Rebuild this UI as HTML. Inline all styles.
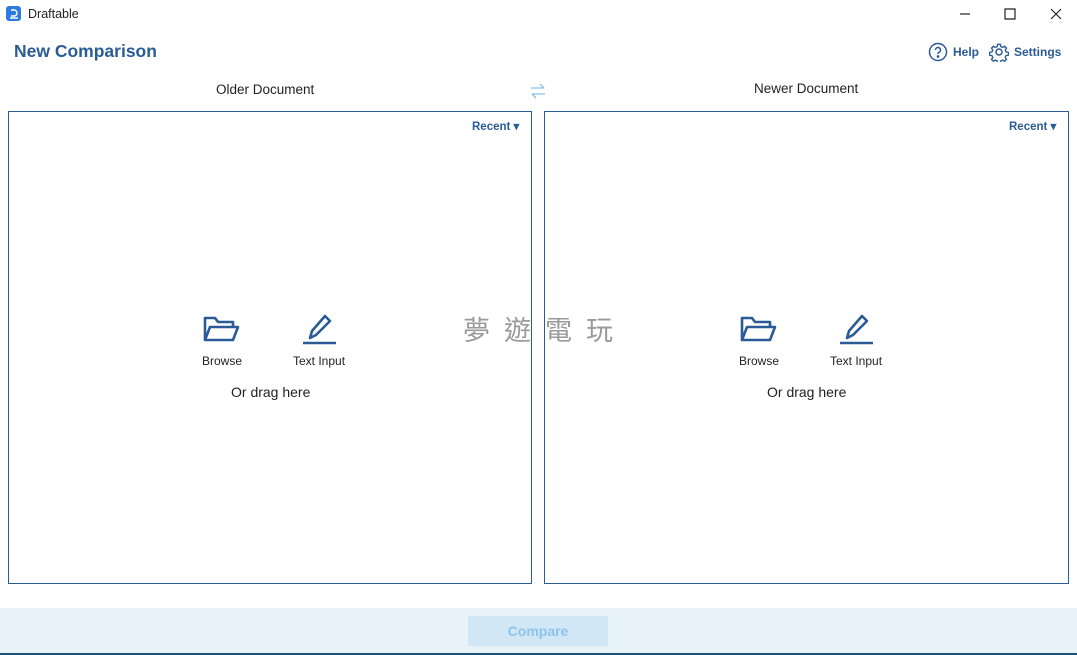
<!DOCTYPE html>
<html><head><meta charset="utf-8"><style>
body{margin:0;width:1077px;height:655px;position:relative;background:#fff;font-family:"Liberation Sans","Noto Sans CJK SC",sans-serif;overflow:hidden;color:#222}
.a{position:absolute}
.box{position:absolute;border:1px solid #2a5b96;background:#fff}
.blue{color:#2a5b96}
.lbl{font-size:12px;color:#222}
.rec{font-size:11.5px;font-weight:bold;color:#2a5b96}
</style></head><body>
<div class="a" style="left:6px;top:6px;width:15px;height:15px;background:#2d7be0;border-radius:3px"></div>
<svg class="a" style="left:6px;top:6px" width="15" height="15"><path d="M5 4h3a3 3 0 0 1 0 6H5M4 12h8" stroke="#fff" stroke-width="1.4" fill="none"/></svg>
<div class="a" style="left:28px;top:7px;font-size:12.5px">Draftable</div>
<svg class="a" style="left:955px;top:6px" width="110" height="16" stroke="#222" fill="none" stroke-width="1.2"><path d="M5 8h10"/><path d="M50 3h10v10h-10z"/><path d="M96 3l10 10M106 3l-10 10"/></svg>
<div class="a blue" style="left:14px;top:41px;font-size:17.5px;font-weight:bold">New Comparison</div>
<svg class="a" style="left:928px;top:42px" width="20" height="20" fill="none" stroke="#2a5b96" stroke-width="1.5"><circle cx="10" cy="10" r="8.5"/><path d="M7.5 8a2.5 2.5 0 1 1 3.5 2.3c-.8.4-1 1-1 1.7"/><circle cx="10" cy="14.5" r=".6" fill="#2a5b96"/></svg>
<div class="a blue" style="left:953px;top:45px;font-size:12px;font-weight:bold">Help</div>
<svg class="a" style="left:989px;top:42px" width="20" height="20" fill="none" stroke="#2a5b96" stroke-width="1.5"><circle cx="10" cy="10" r="3"/><path d="M8.5 1.5h3l.5 2.5 2 1 2.2-1.4 2.1 2.1-1.4 2.2 1 2 2.6.6v3l-2.6.5-1 2 1.4 2.2-2.1 2.1-2.2-1.4-2 1-.5 2.6h-3l-.5-2.6-2-1-2.2 1.4-2.1-2.1 1.4-2.2-1-2-2.6-.5v-3l2.6-.6 1-2-1.4-2.2 2.1-2.1 2.2 1.4 2-1z" transform="translate(1 1) scale(.9)"/></svg>
<div class="a blue" style="left:1014px;top:45px;font-size:12px;font-weight:bold">Settings</div>
<div class="a" style="left:216px;top:82px;font-size:13.5px">Older Document</div>
<div class="a" style="left:754px;top:81px;font-size:13.5px">Newer Document</div>
<svg class="a" style="left:529px;top:82px" width="18" height="18" fill="none" stroke="#8cc0ea" stroke-width="1.3"><path d="M2 6h13M11 2l4 4M16 12H3M7 16l-4-4"/></svg>
<div class="box" style="left:8px;top:111px;width:522px;height:471px"></div>
<div class="box" style="left:544px;top:111px;width:523px;height:471px"></div>
<div class="a rec" style="left:472px;top:119px">Recent ▾</div>
<div class="a rec" style="left:1009px;top:119px">Recent ▾</div>
<svg class="a" style="left:202px;top:315px" width="40" height="30" fill="none" stroke="#2a5b96" stroke-width="2.6" stroke-linejoin="round"><path d="M3 25V3h10l3 4h15v5"/><path d="M3 25l5-13h28l-5 13z"/></svg>
<svg class="a" style="left:302px;top:312px" width="36" height="34" fill="none" stroke="#2a5b96" stroke-width="2.6" stroke-linejoin="round"><path d="M8 26l2-7L23 4l5 5-14 14z"/><path d="M1 31h33"/></svg>
<svg class="a" style="left:739px;top:315px" width="40" height="30" fill="none" stroke="#2a5b96" stroke-width="2.6" stroke-linejoin="round"><path d="M3 25V3h10l3 4h15v5"/><path d="M3 25l5-13h28l-5 13z"/></svg>
<svg class="a" style="left:839px;top:312px" width="36" height="34" fill="none" stroke="#2a5b96" stroke-width="2.6" stroke-linejoin="round"><path d="M8 26l2-7L23 4l5 5-14 14z"/><path d="M1 31h33"/></svg>
<div class="a lbl" style="left:202px;top:354px">Browse</div>
<div class="a lbl" style="left:293px;top:354px">Text Input</div>
<div class="a lbl" style="left:739px;top:354px">Browse</div>
<div class="a lbl" style="left:830px;top:354px">Text Input</div>
<div class="a" style="left:231px;top:384px;font-size:14px">Or drag here</div>
<div class="a" style="left:767px;top:384px;font-size:14px">Or drag here</div>
<div class="a" style="left:463px;top:309px;font-size:27px;color:#9a9a9a;letter-spacing:14px;font-family:'Noto Sans CJK TC',sans-serif">夢遊電玩</div>
<div class="a" style="left:0;top:608px;width:1077px;height:45px;background:#e7f2f9"></div>
<div class="a" style="left:0;top:653px;width:1077px;height:2px;background:#1d4f7a"></div>
<div class="a" style="left:468px;top:616px;width:140px;height:30px;background:#d1e7f6;color:#8ec4ec;font-size:14px;font-weight:bold;text-align:center;line-height:30px">Compare</div>
</body></html>
